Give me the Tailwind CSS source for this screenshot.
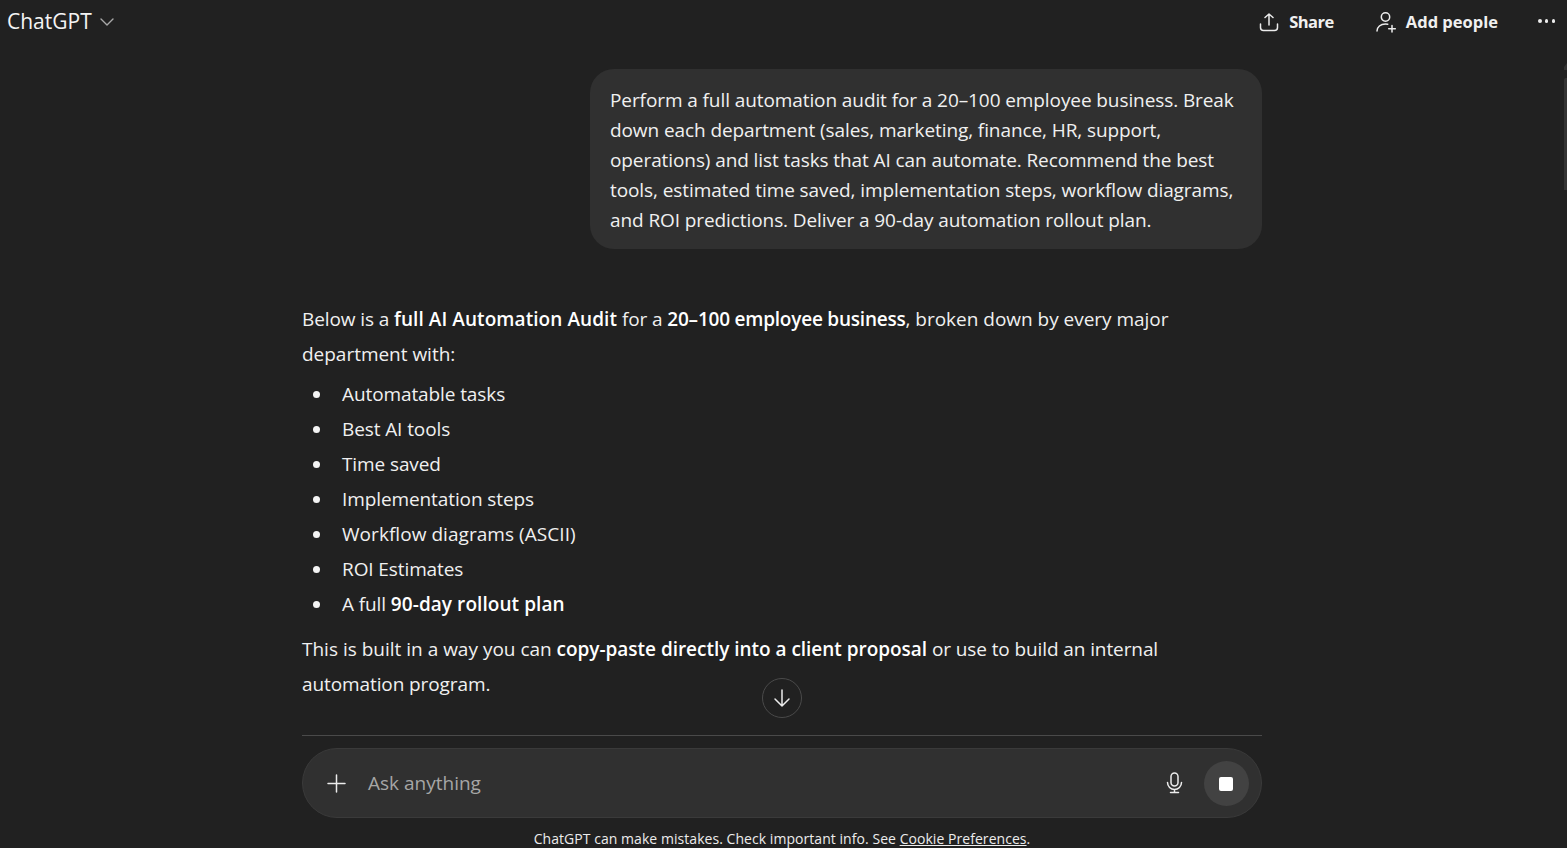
<!DOCTYPE html>
<html><head><meta charset="utf-8"><script src="https://cdn.jsdelivr.net/npm/@tailwindcss/browser@4"></script></head>
<body class="bg-[#212121] text-[#f0f0f0] font-['Open_Sans',sans-serif] overflow-hidden">
<div class="relative h-[848px] w-[1567px] flex flex-col overflow-hidden">
  <header class="h-[44px] flex items-center justify-between pl-[7px] pr-[12px] shrink-0">
    <div class="flex items-center gap-[8px]">
      <span class="text-[21px] text-[#f4f4f4]">ChatGPT</span>
      <svg width="14" height="14" viewBox="0 0 14 14" fill="none" stroke="#a8a8a8" stroke-width="1.4" stroke-linecap="round" stroke-linejoin="round"><path d="M1 4l6 6 6-6"/></svg>
    </div>
    <div class="flex items-center">
      <div class="flex items-center gap-[10px] font-bold text-[16.5px] tracking-[-0.5px]">
        <svg width="20" height="20" viewBox="0 0 20 20" fill="none" stroke="#ececec" stroke-width="1.5" stroke-linecap="round" stroke-linejoin="round"><path d="M10 13V2M6 5.5L10 2l4 3.5"/><path d="M1.5 12v3.5a3 3 0 003 3h11a3 3 0 003-3V12"/></svg>
        <span>Share</span>
      </div>
      <div class="flex items-center gap-[9px] font-bold text-[16.5px] tracking-[0px] ml-[42px]">
        <svg width="21" height="22" viewBox="0 0 21 22" fill="none" stroke="#ececec" stroke-width="1.5" stroke-linecap="round" stroke-linejoin="round"><circle cx="9.5" cy="6" r="4.2"/><path d="M1 20c0-4 3.5-7 8.5-7 1 0 1.5.1 2.2.3"/><path d="M16 14.5v6.5M12.7 17.8h6.6"/></svg>
        <span>Add people</span>
      </div>
      <div class="flex items-center gap-[3.25px] ml-[40px] mb-[2px]">
        <span class="w-[3.5px] h-[3.5px] rounded-full bg-[#ececec]"></span><span class="w-[3.5px] h-[3.5px] rounded-full bg-[#ececec]"></span><span class="w-[3.5px] h-[3.5px] rounded-full bg-[#ececec]"></span>
      </div>
    </div>
  </header>
  <main class="flex-1 w-[960px] ml-[302px] relative">
    <div class="flex justify-end mt-[25px]">
      <div class="w-[672px] bg-[#303030] rounded-[24px] pl-[20px] pr-[20px] pt-[16px] pb-[14px] text-[19px] leading-[30px] tracking-[-0.09px]">
        Perform a full automation audit for a 20–100 employee business. Break down each department (sales, marketing, finance, HR, support, operations) and list tasks that AI can automate. Recommend the best tools, estimated time saved, implementation steps, workflow diagrams, and ROI predictions. Deliver a 90-day automation rollout plan.
      </div>
    </div>
    <div class="mt-[53px] text-[19px] leading-[35px] tracking-[-0.1px] pr-[80px]">
      <p>Below is a <b class="font-semibold text-white tracking-[0.07px]">full AI Automation Audit</b> for a <b class="font-semibold text-white tracking-[-0.22px]">20–100 employee business</b><span class="tracking-[-0.02px]">, broken down by every major department with:</span></p>
      <ul class="mt-[5px] pl-[11px]">
        <li class="flex items-center gap-[22px]"><span class="w-[7px] h-[7px] rounded-full bg-[#f4f4f4]"></span><span>Automatable tasks</span></li>
        <li class="flex items-center gap-[22px]"><span class="w-[7px] h-[7px] rounded-full bg-[#f4f4f4]"></span><span>Best AI tools</span></li>
        <li class="flex items-center gap-[22px]"><span class="w-[7px] h-[7px] rounded-full bg-[#f4f4f4]"></span><span>Time saved</span></li>
        <li class="flex items-center gap-[22px]"><span class="w-[7px] h-[7px] rounded-full bg-[#f4f4f4]"></span><span>Implementation steps</span></li>
        <li class="flex items-center gap-[22px]"><span class="w-[7px] h-[7px] rounded-full bg-[#f4f4f4]"></span><span class="tracking-[0.05px]">Workflow diagrams (ASCII)</span></li>
        <li class="flex items-center gap-[22px]"><span class="w-[7px] h-[7px] rounded-full bg-[#f4f4f4]"></span><span>ROI Estimates</span></li>
        <li class="flex items-center gap-[22px]"><span class="w-[7px] h-[7px] rounded-full bg-[#f4f4f4]"></span><span>A full <b class="font-semibold text-white tracking-[0.07px]">90-day rollout plan</b></span></li>
      </ul>
      <p class="mt-[10px]"><span class="tracking-[0px]">This is built in a way you can</span> <b class="font-semibold text-white tracking-[-0.03px]">copy-paste directly into a client proposal</b> or use to build an internal automation program.</p>
    </div>
    <button class="absolute left-[460px] top-[634px] w-[40px] h-[40px] rounded-full border border-[#4a4a4a] bg-[#212121] flex items-center justify-center">
      <svg width="18" height="20" viewBox="0 0 18 20" fill="none" stroke="#ececec" stroke-width="1.5" stroke-linecap="round" stroke-linejoin="round"><path d="M9 2v16M2 11l7 7 7-7"/></svg>
    </button>
  </main>
  <footer class="w-[960px] ml-[302px] shrink-0 border-t border-[#4a4a4a] pt-[12px]">
    <div class="h-[70px] rounded-full bg-[#303030] border border-[#3a3a3a] flex items-center pl-[24px] pr-[12px]">
      <svg width="19" height="19" viewBox="0 0 19 19" fill="none" stroke="#ececec" stroke-width="1.5" stroke-linecap="round"><path d="M9.5 1v17M1 9.5h17"/></svg>
      <span class="ml-[22px] text-[19px] text-[#a6a6a6]">Ask anything</span>
      <svg class="ml-auto mr-[21px]" width="17" height="22" viewBox="0 0 17 22" fill="none" stroke="#ececec" stroke-width="1.5" stroke-linecap="round"><rect x="5" y="1" width="7" height="13" rx="3.5"/><path d="M1.5 10.5a7 7 0 0014 0M8.5 17.5V20.5M4.5 20.5h8"/></svg>
      <div class="w-[45px] h-[45px] rounded-full bg-[#424242] flex items-center justify-center"><span class="w-[14px] h-[14px] rounded-[2px] bg-white mr-[1px] mt-[1px]"></span></div>
    </div>
    <p class="h-[30px] text-center text-[14px] leading-[41px] tracking-[0.05px] text-[#ececec] whitespace-nowrap">ChatGPT can make mistakes. Check important info. See <span class="underline">Cookie Preferences</span>.</p>
  </footer>
  <svg class="absolute right-0 top-[63px]" width="3" height="7" viewBox="0 0 3 7" fill="#343434"><path d="M3 0v7H0V4z"/></svg>
  <div class="absolute right-0 top-[78px] w-[3px] h-[112px] rounded-tl-[2px] bg-[#343434]"></div>
</div>
</body></html>
